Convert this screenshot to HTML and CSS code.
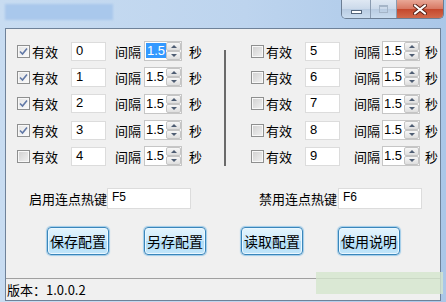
FILE: index.html
```html
<!DOCTYPE html>
<html lang="zh-CN">
<head>
  <meta charset="UTF-8">
  <title>连点设置</title>
  <link rel="stylesheet" href="styles.css">
</head>
<body>

<div class="window">
  <div class="titlebar">
    <div class="title-blur"></div>
    <div class="caption">
      <span class="cap min"><i></i></span>
      <span class="cap max"><i></i></span>
      <span class="cap close">
        <svg width="14" height="11" viewBox="0 0 14 11">
          <path d="M2 1.5 L12 9.5 M12 1.5 L2 9.5" stroke="#5a2318" stroke-width="4" stroke-linecap="round"/>
          <path d="M2 1.5 L12 9.5 M12 1.5 L2 9.5" stroke="#fff" stroke-width="2.2" stroke-linecap="round"/>
        </svg>
      </span>
    </div>
  </div>

  <div class="client">
    <div class="groups">
      <div class="group left">
        <div class="row">
          <span class="chk on"><svg width="11" height="11" viewBox="0 0 11 11"><path d="M2 5.5 L4.5 8 L9 2.5" fill="none" stroke="#6178a6" stroke-width="1.6"/></svg></span>
          <span class="lbl">有效</span>
          <span class="field">0</span>
          <span class="lbl2">间隔</span>
          <span class="spin"><span class="val"><b class="sel">1.5</b></span><span class="arrows"><i class="up"></i><i class="dn"></i></span></span>
          <span class="sec">秒</span>
        </div>
        <div class="row">
          <span class="chk on"><svg width="11" height="11" viewBox="0 0 11 11"><path d="M2 5.5 L4.5 8 L9 2.5" fill="none" stroke="#6178a6" stroke-width="1.6"/></svg></span>
          <span class="lbl">有效</span>
          <span class="field">1</span>
          <span class="lbl2">间隔</span>
          <span class="spin"><span class="val">1.5</span><span class="arrows"><i class="up"></i><i class="dn"></i></span></span>
          <span class="sec">秒</span>
        </div>
        <div class="row">
          <span class="chk on"><svg width="11" height="11" viewBox="0 0 11 11"><path d="M2 5.5 L4.5 8 L9 2.5" fill="none" stroke="#6178a6" stroke-width="1.6"/></svg></span>
          <span class="lbl">有效</span>
          <span class="field">2</span>
          <span class="lbl2">间隔</span>
          <span class="spin"><span class="val">1.5</span><span class="arrows"><i class="up"></i><i class="dn"></i></span></span>
          <span class="sec">秒</span>
        </div>
        <div class="row">
          <span class="chk on"><svg width="11" height="11" viewBox="0 0 11 11"><path d="M2 5.5 L4.5 8 L9 2.5" fill="none" stroke="#6178a6" stroke-width="1.6"/></svg></span>
          <span class="lbl">有效</span>
          <span class="field">3</span>
          <span class="lbl2">间隔</span>
          <span class="spin"><span class="val">1.5</span><span class="arrows"><i class="up"></i><i class="dn"></i></span></span>
          <span class="sec">秒</span>
        </div>
        <div class="row">
          <span class="chk"></span>
          <span class="lbl">有效</span>
          <span class="field">4</span>
          <span class="lbl2">间隔</span>
          <span class="spin"><span class="val">1.5</span><span class="arrows"><i class="up"></i><i class="dn"></i></span></span>
          <span class="sec">秒</span>
        </div>
      </div>

      <div class="divider"></div>

      <div class="group right">
        <div class="row">
          <span class="chk"></span>
          <span class="lbl">有效</span>
          <span class="field">5</span>
          <span class="lbl2">间隔</span>
          <span class="spin"><span class="val">1.5</span><span class="arrows"><i class="up"></i><i class="dn"></i></span></span>
          <span class="sec">秒</span>
        </div>
        <div class="row">
          <span class="chk"></span>
          <span class="lbl">有效</span>
          <span class="field">6</span>
          <span class="lbl2">间隔</span>
          <span class="spin"><span class="val">1.5</span><span class="arrows"><i class="up"></i><i class="dn"></i></span></span>
          <span class="sec">秒</span>
        </div>
        <div class="row">
          <span class="chk"></span>
          <span class="lbl">有效</span>
          <span class="field">7</span>
          <span class="lbl2">间隔</span>
          <span class="spin"><span class="val">1.5</span><span class="arrows"><i class="up"></i><i class="dn"></i></span></span>
          <span class="sec">秒</span>
        </div>
        <div class="row">
          <span class="chk"></span>
          <span class="lbl">有效</span>
          <span class="field">8</span>
          <span class="lbl2">间隔</span>
          <span class="spin"><span class="val">1.5</span><span class="arrows"><i class="up"></i><i class="dn"></i></span></span>
          <span class="sec">秒</span>
        </div>
        <div class="row">
          <span class="chk"></span>
          <span class="lbl">有效</span>
          <span class="field">9</span>
          <span class="lbl2">间隔</span>
          <span class="spin"><span class="val">1.5</span><span class="arrows"><i class="up"></i><i class="dn"></i></span></span>
          <span class="sec">秒</span>
        </div>
      </div>
    </div>

    <div class="hotkeys">
      <span class="hk-label">启用连点热键</span>
      <span class="hk-field">F5</span>
      <span class="hk-label hk-off">禁用连点热键</span>
      <span class="hk-field">F6</span>
    </div>

    <div class="actions">
      <button>保存配置</button>
      <button>另存配置</button>
      <button>读取配置</button>
      <button>使用说明</button>
    </div>

    <div class="status">版本：1.0.0.2</div>
  </div>

  <div class="stamp"></div>
</div>

</body>
</html>
```

FILE: styles.css
```css
body {
  margin: 0;
  font-family: "Noto Sans CJK SC", "Liberation Sans", sans-serif;
  font-size: 13px;
  color: #000;
}
.window {
  position: relative;
  width: 446px;
  height: 302px;
  overflow: hidden;
  background: linear-gradient(to right, #c8dcf1, #bdd4ee 55%, #aac7e8);
}
.titlebar {
  display: flex;
  align-items: flex-start;
  height: 28px;
}
.title-blur {
  width: 108px;
  height: 16px;
  margin: 4px 0 0 5px;
  background: #a9c8ec;
  filter: blur(1px);
}
.caption {
  display: flex;
  margin-left: auto;
  margin-right: 2px;
  border: 1px solid #6c7e94;
  border-top: none;
  border-radius: 0 0 5px 5px;
  overflow: hidden;
}
.cap {
  display: flex;
  align-items: center;
  justify-content: center;
  height: 18px;
}
.min {
  width: 28px;
  background: linear-gradient(#dfe8f3, #cbd9ea 50%, #b8cbe1 50%, #cadcef);
  border-right: 1px solid #8a9bb0;
}
.min i {
  width: 9px;
  height: 2px;
  margin-top: 5px;
  background: #fff;
  border: 1px solid #55667c;
}
.max {
  width: 25px;
  background: linear-gradient(#dfe8f3, #cbd9ea 50%, #b8cbe1 50%, #cadcef);
  border-right: 1px solid #8a9bb0;
}
.max i {
  width: 7px;
  height: 5px;
  border: 1px solid #a5b5c8;
  border-top-width: 2px;
}
.close {
  width: 46px;
  background: linear-gradient(#e9a796, #d77762 50%, #c4472c 50%, #d26a4c);
}
.client {
  display: flex;
  flex-direction: column;
  height: 271px;
  margin: 0 5px;
  border: 1px solid #6f8299;
  background: #f0f0f0;
}
.groups {
  display: flex;
  padding: 9px 0 0 11px;
}
.group {
  display: flex;
  flex-direction: column;
}
.row {
  display: flex;
  align-items: center;
  height: 26.3px;
}
.chk {
  display: flex;
  align-items: center;
  justify-content: center;
  box-sizing: border-box;
  width: 13px;
  height: 13px;
  border: 1px solid #8e8f8f;
  background: linear-gradient(135deg, #cfcfcf, #f2f2f2);
  box-shadow: inset 0 0 0 1px #f8f8f8;
}
.chk.on {
  background: linear-gradient(135deg, #e4e4e4, #fbfbfb);
}
.lbl {
  width: 39px;
  padding-left: 2px;
}
.field {
  box-sizing: border-box;
  width: 35px;
  height: 19px;
  padding: 0 0 0 4px;
  border: 1px solid #dcdcdc;
  background: #fff;
  font-family: "Liberation Sans", sans-serif;
  font-size: 13px;
  line-height: 15px;
}
.lbl2 {
  width: 29px;
  padding-left: 9px;
}
.right .lbl2 {
  width: 28px;
  padding-left: 14px;
}
.spin {
  display: flex;
  box-sizing: border-box;
  width: 38px;
  height: 20px;
  border: 1px solid #c6c6c6;
  background: #fff;
}
.val {
  flex: 1;
  padding: 1px 0 0 1px;
  font-family: "Liberation Sans", sans-serif;
  font-size: 13px;
  line-height: 15px;
}
.sel {
  font-weight: normal;
  padding: 0 1px;
  background: #3399ff;
  color: #fff;
}
.arrows {
  display: flex;
  flex-direction: column;
  width: 15px;
}
.arrows i {
  position: relative;
  flex: 1;
  border: 1px solid #c4c4c4;
  border-radius: 2px;
  background: linear-gradient(#f7f7f7, #dedede);
}
.arrows i::after {
  content: "";
  position: absolute;
  left: 4px;
  top: 2px;
  border-left: 3px solid transparent;
  border-right: 3px solid transparent;
}
.arrows .up::after {
  border-bottom: 3px solid #4e5d73;
}
.arrows .dn::after {
  border-top: 3px solid #4e5d73;
}
.sec {
  padding-left: 7px;
}
.right .sec {
  padding-left: 5px;
}
.divider {
  width: 2px;
  height: 116px;
  margin: 12px 25px 0 22px;
  background: #6a6a6a;
}
.hotkeys {
  display: flex;
  align-items: center;
  margin-top: 19px;
  padding-left: 23px;
}
.hk-label {
  width: 78px;
}
.hk-off {
  margin-left: 68px;
  width: 79px;
}
.hk-field {
  box-sizing: border-box;
  width: 84px;
  height: 21px;
  padding-left: 4px;
  border: 1px solid #dcdcdc;
  background: #fff;
  font-family: "Liberation Sans", sans-serif;
  font-size: 12px;
  line-height: 17px;
}
.actions {
  display: flex;
  gap: 35px;
  margin-top: 18px;
  padding-left: 41px;
}
button {
  width: 62px;
  height: 28px;
  padding: 0;
  border: 1px solid #3a86bb;
  border-radius: 4px;
  background: linear-gradient(#e3f4fd, #cdeafb 50%, #aedcf6 50%, #c3e6fa);
  box-shadow: inset 0 0 0 1px #eaf7ff, 0 0 1px 1px #9fcbe8;
  font-family: "Noto Sans CJK SC", sans-serif;
  font-size: 14px;
  color: #000;
}
.status {
  margin-top: auto;
  height: 21px;
  padding-left: 1px;
  border-top: 1px solid #a0a0a0;
  line-height: 21px;
  font-size: 13px;
}
.stamp {
  position: absolute;
  left: 316px;
  top: 272px;
  width: 127px;
  height: 22px;
  background: rgba(212, 230, 205, 0.8);
}
```
